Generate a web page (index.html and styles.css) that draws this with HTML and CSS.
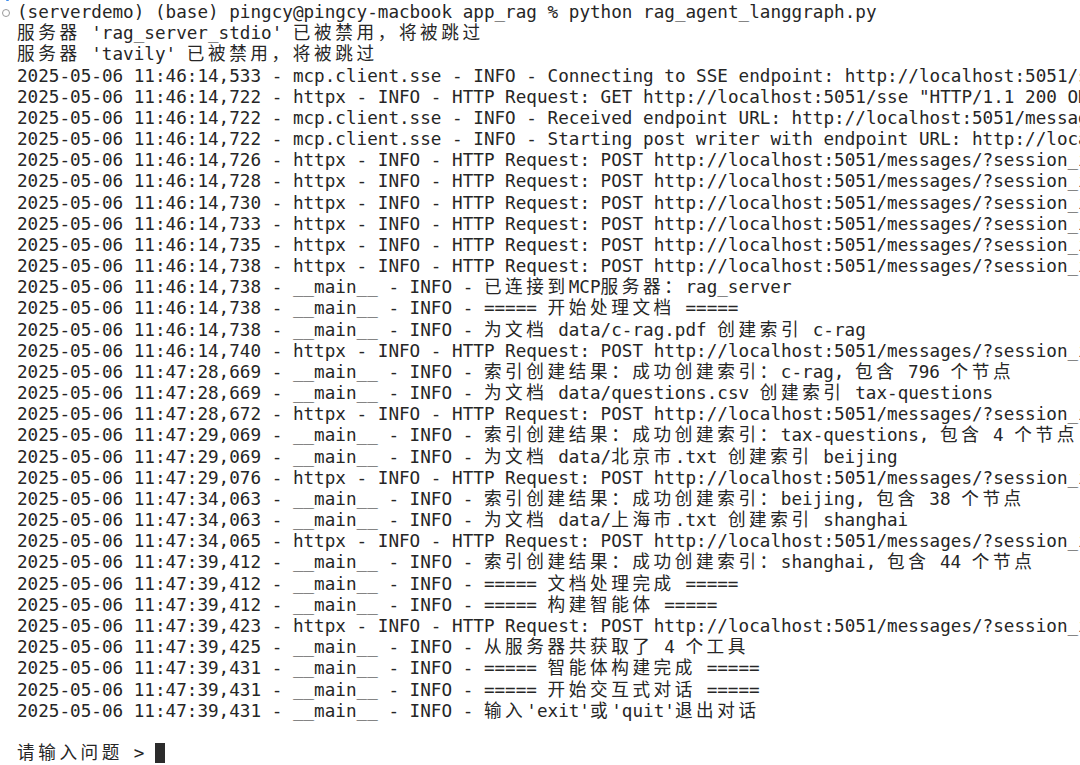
FILE: index.html
```html
<!DOCTYPE html>
<html lang="zh-CN">
<head>
<meta charset="utf-8">
<title>rag_agent_langgraph.py</title>
<link rel="stylesheet" href="styles.css">
</head>
<body>
<div class="term">
<span class="dot"></span>
<span class="mark"></span>
<div class="ln">(serverdemo) (base) pingcy@pingcy-macbook app_rag % python rag_agent_langgraph.py</div>
<div class="ln"><span class="c">服务器</span> 'rag_server_stdio' <span class="c">已被禁用，将被跳过</span></div>
<div class="ln"><span class="c">服务器</span> 'tavily' <span class="c">已被禁用，将被跳过</span></div>
<div class="ln">2025-05-06 11:46:14,533 - mcp.client.sse - INFO - Connecting to SSE endpoint: http://localhost:5051/sse</div>
<div class="ln">2025-05-06 11:46:14,722 - httpx - INFO - HTTP Request: GET http://localhost:5051/sse "HTTP/1.1 200 OK"</div>
<div class="ln">2025-05-06 11:46:14,722 - mcp.client.sse - INFO - Received endpoint URL: http://localhost:5051/messages/?session_id=8f2c</div>
<div class="ln">2025-05-06 11:46:14,722 - mcp.client.sse - INFO - Starting post writer with endpoint URL: http://localhost:5051/messages/</div>
<div class="ln">2025-05-06 11:46:14,726 - httpx - INFO - HTTP Request: POST http://localhost:5051/messages/?session_id=8f2c</div>
<div class="ln">2025-05-06 11:46:14,728 - httpx - INFO - HTTP Request: POST http://localhost:5051/messages/?session_id=8f2c</div>
<div class="ln">2025-05-06 11:46:14,730 - httpx - INFO - HTTP Request: POST http://localhost:5051/messages/?session_id=8f2c</div>
<div class="ln">2025-05-06 11:46:14,733 - httpx - INFO - HTTP Request: POST http://localhost:5051/messages/?session_id=8f2c</div>
<div class="ln">2025-05-06 11:46:14,735 - httpx - INFO - HTTP Request: POST http://localhost:5051/messages/?session_id=8f2c</div>
<div class="ln">2025-05-06 11:46:14,738 - httpx - INFO - HTTP Request: POST http://localhost:5051/messages/?session_id=8f2c</div>
<div class="ln">2025-05-06 11:46:14,738 - __main__ - INFO - <span class="c">已连接到</span>MCP<span class="c">服务器：</span>rag_server</div>
<div class="ln">2025-05-06 11:46:14,738 - __main__ - INFO - ===== <span class="c">开始处理文档</span> =====</div>
<div class="ln">2025-05-06 11:46:14,738 - __main__ - INFO - <span class="c">为文档</span> data/c-rag.pdf <span class="c">创建索引</span> c-rag</div>
<div class="ln">2025-05-06 11:46:14,740 - httpx - INFO - HTTP Request: POST http://localhost:5051/messages/?session_id=8f2c</div>
<div class="ln">2025-05-06 11:47:28,669 - __main__ - INFO - <span class="c">索引创建结果：成功创建索引：</span>c-rag, <span class="c">包含</span> 796 <span class="c">个节点</span></div>
<div class="ln">2025-05-06 11:47:28,669 - __main__ - INFO - <span class="c">为文档</span> data/questions.csv <span class="c">创建索引</span> tax-questions</div>
<div class="ln">2025-05-06 11:47:28,672 - httpx - INFO - HTTP Request: POST http://localhost:5051/messages/?session_id=8f2c</div>
<div class="ln">2025-05-06 11:47:29,069 - __main__ - INFO - <span class="c">索引创建结果：成功创建索引：</span>tax-questions, <span class="c">包含</span> 4 <span class="c">个节点</span></div>
<div class="ln">2025-05-06 11:47:29,069 - __main__ - INFO - <span class="c">为文档</span> data/<span class="c">北京市</span>.txt <span class="c">创建索引</span> beijing</div>
<div class="ln">2025-05-06 11:47:29,076 - httpx - INFO - HTTP Request: POST http://localhost:5051/messages/?session_id=8f2c</div>
<div class="ln">2025-05-06 11:47:34,063 - __main__ - INFO - <span class="c">索引创建结果：成功创建索引：</span>beijing, <span class="c">包含</span> 38 <span class="c">个节点</span></div>
<div class="ln">2025-05-06 11:47:34,063 - __main__ - INFO - <span class="c">为文档</span> data/<span class="c">上海市</span>.txt <span class="c">创建索引</span> shanghai</div>
<div class="ln">2025-05-06 11:47:34,065 - httpx - INFO - HTTP Request: POST http://localhost:5051/messages/?session_id=8f2c</div>
<div class="ln">2025-05-06 11:47:39,412 - __main__ - INFO - <span class="c">索引创建结果：成功创建索引：</span>shanghai, <span class="c">包含</span> 44 <span class="c">个节点</span></div>
<div class="ln">2025-05-06 11:47:39,412 - __main__ - INFO - ===== <span class="c">文档处理完成</span> =====</div>
<div class="ln">2025-05-06 11:47:39,412 - __main__ - INFO - ===== <span class="c">构建智能体</span> =====</div>
<div class="ln">2025-05-06 11:47:39,423 - httpx - INFO - HTTP Request: POST http://localhost:5051/messages/?session_id=8f2c</div>
<div class="ln">2025-05-06 11:47:39,425 - __main__ - INFO - <span class="c">从服务器共获取了</span> 4 <span class="c">个工具</span></div>
<div class="ln">2025-05-06 11:47:39,431 - __main__ - INFO - ===== <span class="c">智能体构建完成</span> =====</div>
<div class="ln">2025-05-06 11:47:39,431 - __main__ - INFO - ===== <span class="c">开始交互式对话</span> =====</div>
<div class="ln">2025-05-06 11:47:39,431 - __main__ - INFO - <span class="c">输入</span>'exit'<span class="c">或</span>'quit'<span class="c">退出对话</span></div>
<div class="ln"> </div>
<div class="ln"><span class="c">请输入问题</span> &gt; <span class="cursor"></span></div>
</div>
</body>
</html>
```

FILE: styles.css
```css
html, body {
  margin: 0;
  padding: 0;
  background: #ffffff;
  width: 1080px;
  height: 765px;
  overflow: hidden;
}

.term {
  position: relative;
  padding: 2px 0 0 17px;
  font-family: "DejaVu Sans Mono", "Noto Sans CJK SC", monospace;
  font-size: 17.64px;
  line-height: 21.18px;
  color: #262626;
}

.ln {
  white-space: pre;
  overflow: hidden;
  height: 21.18px;
}

.c {
  font-family: "DejaVu Sans Mono", "Noto Sans CJK SC", monospace;
  letter-spacing: calc(2ch - 1em);
}

.mark {
  position: absolute;
  left: 2px;
  top: 9px;
  width: 8px;
  height: 8px;
  border: 1.2px solid #9a9a9a;
  border-radius: 50%;
  box-sizing: border-box;
}

.dot {
  position: absolute;
  left: 6px;
  top: -1px;
  width: 3px;
  height: 2px;
  border-radius: 1px;
  background: #3d8ef0;
}

.cursor {
  display: inline-block;
  width: 10.6px;
  height: 20px;
  background: #2c2c2c;
  vertical-align: -4px;
}
```
